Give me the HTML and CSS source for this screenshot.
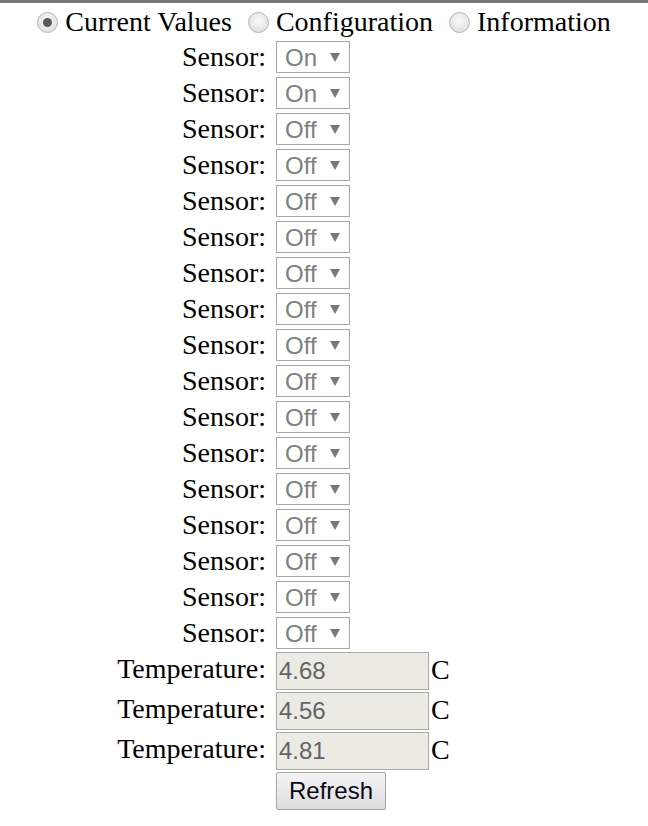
FILE: index.html
```html
<!DOCTYPE html>
<html lang="en">
  <head>
    <meta charset="UTF-8" />
    <meta name="viewport" content="width=device-width, initial-scale=1.0" />
    <title>Sensors</title>
    <link rel="stylesheet" href="styles.css">
  </head>
  <body>
    <div class="topbar"></div>
    <form class="tabs">
      <label class="tab"><input type="radio" name="tab" checked /> Current Values</label>
      <label class="tab"><input type="radio" name="tab" /> Configuration</label>
      <label class="tab"><input type="radio" name="tab" /> Information</label>
    </form>

    <div class="panel">
      <div class="label">Sensor:</div>
      <div class="value"><label class="pick"><select disabled><option>On</option></select><svg class="caret" viewBox="0 0 10 9"><polygon points="0,0 10,0 5,9" /></svg></label></div>
      <div class="label">Sensor:</div>
      <div class="value"><label class="pick"><select disabled><option>On</option></select><svg class="caret" viewBox="0 0 10 9"><polygon points="0,0 10,0 5,9" /></svg></label></div>
      <div class="label">Sensor:</div>
      <div class="value"><label class="pick"><select disabled><option>Off</option></select><svg class="caret" viewBox="0 0 10 9"><polygon points="0,0 10,0 5,9" /></svg></label></div>
      <div class="label">Sensor:</div>
      <div class="value"><label class="pick"><select disabled><option>Off</option></select><svg class="caret" viewBox="0 0 10 9"><polygon points="0,0 10,0 5,9" /></svg></label></div>
      <div class="label">Sensor:</div>
      <div class="value"><label class="pick"><select disabled><option>Off</option></select><svg class="caret" viewBox="0 0 10 9"><polygon points="0,0 10,0 5,9" /></svg></label></div>
      <div class="label">Sensor:</div>
      <div class="value"><label class="pick"><select disabled><option>Off</option></select><svg class="caret" viewBox="0 0 10 9"><polygon points="0,0 10,0 5,9" /></svg></label></div>
      <div class="label">Sensor:</div>
      <div class="value"><label class="pick"><select disabled><option>Off</option></select><svg class="caret" viewBox="0 0 10 9"><polygon points="0,0 10,0 5,9" /></svg></label></div>
      <div class="label">Sensor:</div>
      <div class="value"><label class="pick"><select disabled><option>Off</option></select><svg class="caret" viewBox="0 0 10 9"><polygon points="0,0 10,0 5,9" /></svg></label></div>
      <div class="label">Sensor:</div>
      <div class="value"><label class="pick"><select disabled><option>Off</option></select><svg class="caret" viewBox="0 0 10 9"><polygon points="0,0 10,0 5,9" /></svg></label></div>
      <div class="label">Sensor:</div>
      <div class="value"><label class="pick"><select disabled><option>Off</option></select><svg class="caret" viewBox="0 0 10 9"><polygon points="0,0 10,0 5,9" /></svg></label></div>
      <div class="label">Sensor:</div>
      <div class="value"><label class="pick"><select disabled><option>Off</option></select><svg class="caret" viewBox="0 0 10 9"><polygon points="0,0 10,0 5,9" /></svg></label></div>
      <div class="label">Sensor:</div>
      <div class="value"><label class="pick"><select disabled><option>Off</option></select><svg class="caret" viewBox="0 0 10 9"><polygon points="0,0 10,0 5,9" /></svg></label></div>
      <div class="label">Sensor:</div>
      <div class="value"><label class="pick"><select disabled><option>Off</option></select><svg class="caret" viewBox="0 0 10 9"><polygon points="0,0 10,0 5,9" /></svg></label></div>
      <div class="label">Sensor:</div>
      <div class="value"><label class="pick"><select disabled><option>Off</option></select><svg class="caret" viewBox="0 0 10 9"><polygon points="0,0 10,0 5,9" /></svg></label></div>
      <div class="label">Sensor:</div>
      <div class="value"><label class="pick"><select disabled><option>Off</option></select><svg class="caret" viewBox="0 0 10 9"><polygon points="0,0 10,0 5,9" /></svg></label></div>
      <div class="label">Sensor:</div>
      <div class="value"><label class="pick"><select disabled><option>Off</option></select><svg class="caret" viewBox="0 0 10 9"><polygon points="0,0 10,0 5,9" /></svg></label></div>
      <div class="label">Sensor:</div>
      <div class="value"><label class="pick"><select disabled><option>Off</option></select><svg class="caret" viewBox="0 0 10 9"><polygon points="0,0 10,0 5,9" /></svg></label></div>

      <div class="label">Temperature:</div>
      <div class="value temp"><input readonly="readonly" value="4.68" /><span class="unit">C</span></div>
      <div class="label">Temperature:</div>
      <div class="value temp"><input readonly="readonly" value="4.56" /><span class="unit">C</span></div>
      <div class="label">Temperature:</div>
      <div class="value temp"><input readonly="readonly" value="4.81" /><span class="unit">C</span></div>

      <div></div>
      <div class="value temp"><button type="button" id="refresh">Refresh</button></div>
    </div>
  </body>
</html>
```

FILE: styles.css
```css
body {
  margin: 0;
  font-family: "Liberation Serif", "Times New Roman", serif;
  font-size: 28px;
  color: #000;
  background-color: #fff;
}
.topbar {
  height: 3px;
  background-color: rgb(120, 120, 120);
}
.tabs {
  display: flex;
  justify-content: center;
  gap: 16px;
  height: 34px;
  margin: 0;
  padding-top: 2px;
  line-height: 34px;
}
.tab {
  display: flex;
  align-items: center;
  gap: 7px;
}
.tab input {
  appearance: none;
  width: 21px;
  height: 21px;
  margin: 0;
  border: 1px solid rgb(180, 180, 180);
  border-radius: 50%;
  background: radial-gradient(circle at 50% 40%, #fafafa, #d8d8d8);
  display: flex;
  align-items: center;
  justify-content: center;
}
.tab input:checked::before {
  content: "";
  width: 9px;
  height: 9px;
  border-radius: 50%;
  background-color: rgb(90, 90, 90);
}
.panel {
  display: grid;
  grid-template-columns: 266px 1fr;
  column-gap: 10px;
  align-items: start;
}
.label {
  text-align: right;
  line-height: 36px;
  white-space: nowrap;
}
.value {
  height: 36px;
  display: flex;
  align-items: center;
}
.pick {
  display: flex;
  align-items: center;
  box-sizing: border-box;
  width: 74px;
  height: 32px;
  border: 1px solid rgb(169, 169, 169);
  background-color: #fff;
}
.pick select {
  appearance: none;
  border: none;
  background: none;
  width: 46px;
  padding: 0 0 0 8px;
  margin: 0;
  font-family: "Liberation Sans", Arial, sans-serif;
  font-size: 24px;
  color: rgb(128, 128, 128);
  opacity: 1;
}
.caret {
  width: 10px;
  height: 9px;
  margin-left: 7px;
  fill: rgb(120, 120, 120);
}
.temp {
  height: 40px;
  align-items: baseline;
}
.temp input {
  box-sizing: border-box;
  width: 153px;
  height: 38px;
  margin-top: 1px;
  padding: 0 2px;
  border: 1px solid rgb(169, 169, 169);
  background-color: rgb(235, 235, 228);
  font-family: "Liberation Sans", Arial, sans-serif;
  font-size: 24px;
  color: rgb(100, 100, 100);
}
.temp input:focus {
  outline: none;
}
.unit {
  margin-left: 2px;
}
#refresh {
  box-sizing: border-box;
  width: 110px;
  height: 38px;
  margin-top: 1px;
  border: 1px solid rgb(166, 166, 166);
  border-radius: 2px;
  background: linear-gradient(#f4f4f4, #dddddd);
  font-family: "Liberation Sans", Arial, sans-serif;
  font-size: 24px;
  color: rgb(10, 10, 20);
  padding: 0;
}
```
